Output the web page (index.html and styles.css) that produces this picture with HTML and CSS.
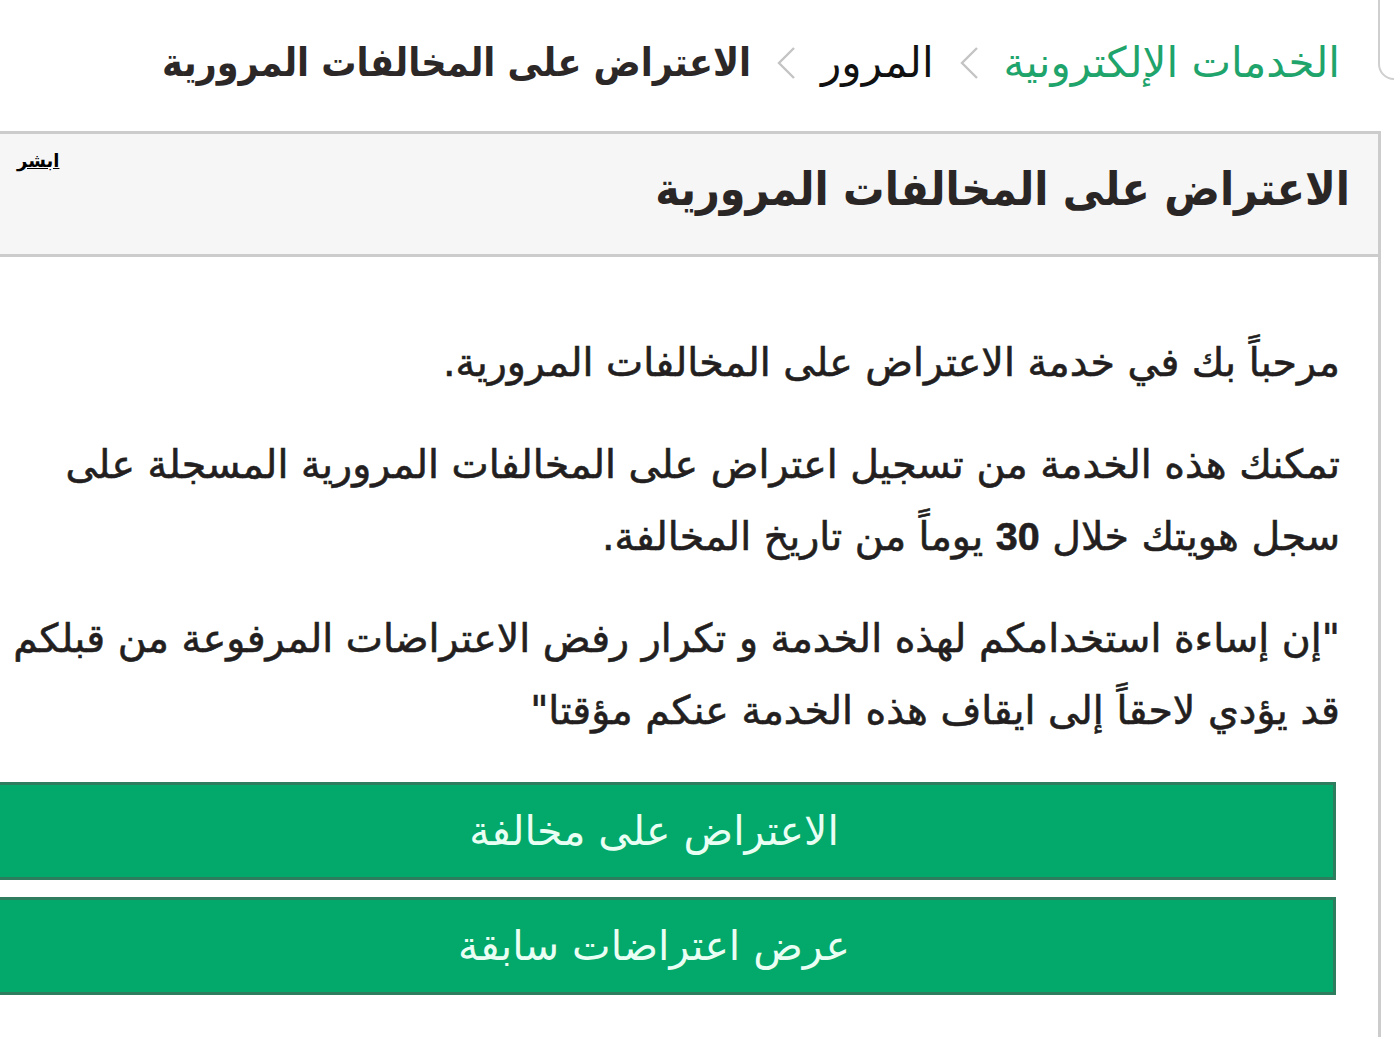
FILE: index.html
```html
<!DOCTYPE html>
<html lang="ar" dir="rtl">
<head>
<meta charset="utf-8">
<title>الاعتراض على المخالفات المرورية</title>
<link rel="stylesheet" href="styles.css">
</head>
<body>
<div class="corner"></div>
<nav class="breadcrumb">
  <a class="crumb crumb-home" href="#">الخدمات الإلكترونية</a>
  <span class="sep"><svg width="22" height="36" viewBox="0 0 22 36"><path d="M19 3 L4 18 L19 33" fill="none" stroke="#c4c4c4" stroke-width="2.4"/></svg></span>
  <a class="crumb crumb-mid" href="#">المرور</a>
  <span class="sep"><svg width="22" height="36" viewBox="0 0 22 36"><path d="M19 3 L4 18 L19 33" fill="none" stroke="#c4c4c4" stroke-width="2.4"/></svg></span>
  <span class="crumb crumb-current">الاعتراض على المخالفات المرورية</span>
</nav>
<section class="panel">
  <header class="panel-head">
    <h1 class="panel-title">الاعتراض على المخالفات المرورية</h1>
    <a class="absher" href="#">ابشر</a>
  </header>
  <div class="panel-body">
    <p class="para">مرحباً بك في خدمة الاعتراض على المخالفات المرورية.</p>
    <p class="para">تمكنك هذه الخدمة من تسجيل اعتراض على المخالفات المرورية المسجلة على<br>سجل هويتك خلال <b>30</b> يوماً من تاريخ المخالفة.</p>
    <p class="para para-warn">"إن إساءة استخدامكم لهذه الخدمة و تكرار رفض الاعتراضات المرفوعة من قبلكم<br>قد يؤدي لاحقاً إلى ايقاف هذه الخدمة عنكم مؤقتا"</p>
    <div class="actions">
      <a class="btn" href="#">الاعتراض على مخالفة</a>
      <a class="btn" href="#">عرض اعتراضات سابقة</a>
    </div>
  </div>
</section>
</body>
</html>
```

FILE: styles.css
```css
html, body {
  margin: 0;
  padding: 0;
  background: #ffffff;
  overflow: hidden;
}
body {
  direction: rtl;
  width: 1394px;
  height: 1037px;
  position: relative;
  font-family: "DejaVu Sans", sans-serif;
  color: #231f20;
}
.corner {
  position: absolute;
  top: -10px;
  right: -20px;
  width: 32px;
  height: 86px;
  border: 2px solid #cfcfcf;
  border-bottom-left-radius: 16px;
  background: #fff;
}
.breadcrumb {
  display: flex;
  align-items: center;
  height: 125px;
  padding-right: 54px;
  margin-bottom: 6px;
  box-sizing: border-box;
  font-size: 42px;
  white-space: nowrap;
}
.crumb {
  text-decoration: none;
}
.crumb-home {
  color: #1fa46c;
}
.crumb-mid {
  color: #111;
}
.crumb-current {
  font-family: "DejaVu Sans Condensed", "DejaVu Sans", sans-serif;
  font-size: 39px;
  color: #2d2828;
  font-weight: bold;
}
.sep {
  display: flex;
  margin: 0 24px;
}
.panel {
  margin-right: 13px;
  margin-left: -30px;
  border-top: 3px solid #cccccc;
  border-right: 3px solid #cccccc;
  height: 920px;
}
.panel-head {
  display: flex;
  justify-content: space-between;
  align-items: flex-start;
  height: 120px;
  background: #f6f6f6;
  border-bottom: 3px solid #cccccc;
}
.panel-title {
  margin: 0;
  padding: 24px 28px 0 0;
  font-family: "DejaVu Sans Condensed", "DejaVu Sans", sans-serif;
  font-size: 46px;
  line-height: 62px;
  font-weight: bold;
  color: #2b2626;
}
.absher {
  margin: 16px 0 0 47px;
  font-family: "DejaVu Sans", sans-serif;
  font-size: 18px;
  font-weight: bold;
  color: #000;
  text-decoration: underline;
}
.panel-body {
  padding: 69px 38px 0 0;
}
.para {
  margin: 0 0 30px 0;
  font-family: "DejaVu Sans", sans-serif;
  font-size: 39.5px;
  line-height: 72px;
  color: #231f20;
  white-space: nowrap;
  -webkit-text-stroke: 0.6px #231f20;
}
.para-warn {
  word-spacing: 0;
}
.para b {
  font-family: "Liberation Sans", sans-serif;
  font-weight: bold;
}
.actions {
  display: flex;
  flex-direction: column;
  gap: 17px;
  margin: 36px 4px 0 2px;
}
.btn {
  display: flex;
  align-items: center;
  justify-content: center;
  height: 92px;
  background: #02a96a;
  border: 3px solid #2d7d5e;
  color: #eafff4;
  font-size: 41px;
  text-decoration: none;
}
```
